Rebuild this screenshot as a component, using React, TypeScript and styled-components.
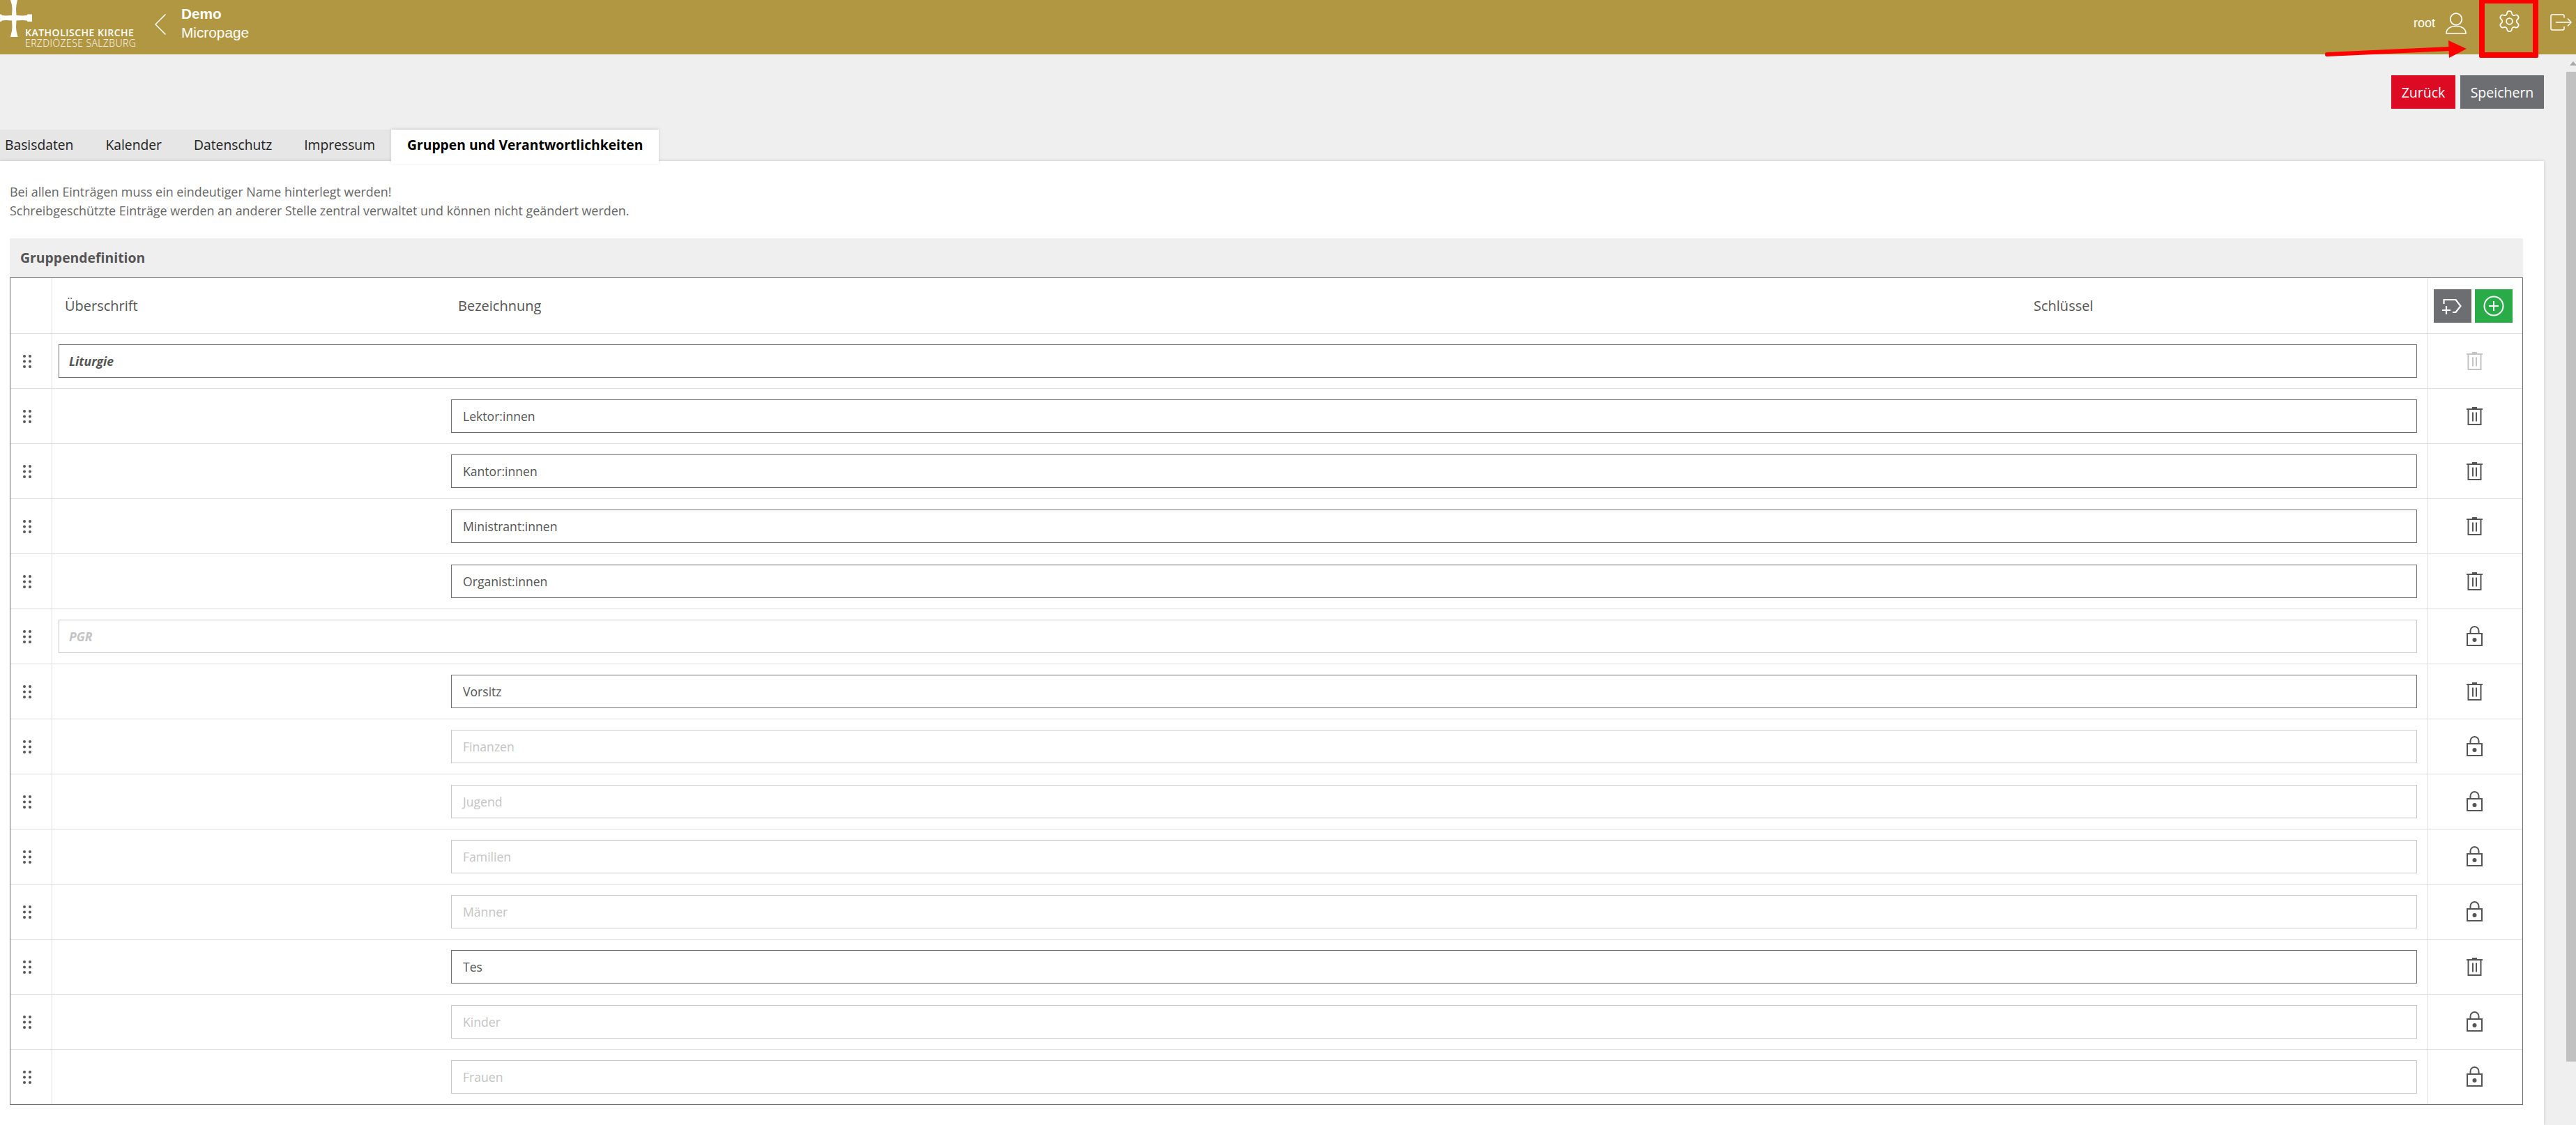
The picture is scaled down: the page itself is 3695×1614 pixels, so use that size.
import React from "react";
import styled, { createGlobalStyle } from "styled-components";
import { Settings } from "lucide-react";

const GlobalStyle = createGlobalStyle`
  html, body {
    margin: 0;
    height: 1614px;
    overflow: hidden;
    background: #efefef;
    font-family: "Open Sans", "Liberation Sans", sans-serif;
  }
  * { box-sizing: border-box; }
`;

const Page = styled.div`
  position: relative;
  width: 3695px;
  height: 1614px;
  overflow: hidden;
`;

const Header = styled.header`
  display: flex;
  height: 78px;
  background: #b29742;
  color: #fff;
`;

const Logo = styled.div`
  display: flex;
  width: 191px;
  flex-shrink: 0;

  svg {
    flex-shrink: 0;
  }
`;

const LogoText = styled.div`
  margin-left: -10px;
  padding-top: 39px;
  font-size: 14px;
  line-height: 15px;
  white-space: nowrap;
`;

const LogoLine = styled.div<{ $light?: boolean }>`
  font-weight: ${(p) => (p.$light ? 300 : 600)};
  letter-spacing: ${(p) => (p.$light ? "0.4px" : "0.5px")};
`;

const BackLink = styled.a`
  display: block;
  margin: 20px 0 0 31px;
  height: 30px;
`;

const PageTitle = styled.div`
  margin-left: 22px;
  padding-top: 6px;
  font-family: "Liberation Sans", Arial, sans-serif;
  font-size: 20.8px;
  line-height: 27px;

  strong {
    display: block;
  }
`;

const UserArea = styled.div`
  display: flex;
  margin-left: auto;
  padding-right: 6px;
`;

const UserName = styled.span`
  margin: 21px 15px 0 0;
  font-family: "Liberation Sans", Arial, sans-serif;
  font-size: 18px;
  line-height: 24px;
`;

const HeaderIcon = styled.a<{ $top: number; $left: number }>`
  display: block;
  margin-top: ${(p) => p.$top}px;
  margin-left: ${(p) => p.$left}px;
`;

const Body = styled.div`
  display: flex;
  height: 1536px;
`;

const Main = styled.main`
  width: 3649px;
  margin-right: 32px;
`;

const Toolbar = styled.div`
  display: flex;
  justify-content: flex-end;
  gap: 7px;
  padding: 30px 0;
`;

const Button = styled.button<{ $bg: string; $width: number }>`
  width: ${(p) => p.$width}px;
  height: 48px;
  padding: 0;
  border: 0;
  background: ${(p) => p.$bg};
  color: #fff;
  font-family: inherit;
  font-size: 19.5px;
`;

const TabBar = styled.nav`
  display: flex;
  height: 45px;
`;

const Tab = styled.a<{ $active?: boolean }>`
  position: relative;
  z-index: ${(p) => (p.$active ? 2 : 0)};
  height: ${(p) => (p.$active ? "49px" : "45px")};
  padding: 0 23px;
  background: ${(p) => (p.$active ? "#fff" : "#e6e6e6")};
  box-shadow: ${(p) => (p.$active ? "0 -1px 4px rgba(0,0,0,.14)" : "none")};
  color: ${(p) => (p.$active ? "#000" : "#222")};
  font-size: 19.3px;
  font-weight: ${(p) => (p.$active ? 700 : 400)};
  line-height: 44px;
  white-space: nowrap;

  &:first-child {
    padding-left: 7px;
  }
`;

const Panel = styled.section`
  position: relative;
  height: 1383px;
  padding: 31px 30px 0 14px;
  background: #fff;
  box-shadow: 0 0 4px rgba(0, 0, 0, 0.2);
`;

const Intro = styled.p`
  margin: 0 0 26px;
  color: #666;
  font-size: 17.9px;
  line-height: 27px;
`;

const SectionTitle = styled.h2`
  height: 56px;
  margin: 0;
  padding-left: 15px;
  background: #efefef;
  color: #555;
  font-size: 19.4px;
  font-weight: 700;
  line-height: 56px;
`;

const Table = styled.div`
  border: 1px solid #6c6e72;
`;

const Row = styled.div<{ $head?: boolean }>`
  display: grid;
  grid-template-columns: 60px 1fr 136px;
  height: ${(p) => (p.$head ? "80px" : "79px")};
  border-bottom: 1px solid #dcdce2;

  &:last-child {
    height: 78px;
    border-bottom: 0;
  }
`;

const GripCell = styled.div`
  display: flex;
  align-items: center;
  padding-left: 18px;
  border-right: 1px solid #dcdce2;
`;

const NameCell = styled.div<{ $child?: boolean }>`
  display: flex;
  align-items: center;
  padding: 0 15px 0 ${(p) => (p.$child ? "572px" : "9px")};
`;

const ActionCell = styled.div`
  display: flex;
  align-items: center;
  justify-content: center;
  padding-right: 2px;
  border-left: 1px solid #dcdce2;
`;

const HeadLabels = styled.div`
  display: grid;
  grid-template-columns: 564px 2260px 1fr;
  width: 100%;
  padding-left: 9px;
  color: #555;
  font-size: 20px;
  font-weight: 400;
`;

const HeadActions = styled.div`
  display: flex;
  gap: 5px;
  padding-left: 8px;
  border-left: 1px solid #dcdce2;
  align-items: center;
`;

const IconButton = styled.button<{ $bg: string }>`
  width: 54px;
  height: 48px;
  padding: 0;
  border: 0;
  background: ${(p) => p.$bg};
  line-height: 0;
`;

const Field = styled.div<{ $locked?: boolean; $heading?: boolean }>`
  width: 100%;
  height: 48px;
  padding-left: ${(p) => (p.$heading ? "14px" : "16px")};
  border: 1px solid ${(p) => (p.$locked ? "#c8c8c8" : "#6c6e72")};
  background: #fff;
  color: ${(p) => (p.$locked ? "#c4c4c4" : "#555")};
  font-size: 17.6px;
  font-style: ${(p) => (p.$heading ? "italic" : "normal")};
  font-weight: ${(p) => (p.$heading ? 700 : 400)};
  line-height: 46px;
`;

const Scrollbar = styled.div`
  position: relative;
  width: 14px;
  padding-top: 25px;
`;

const ScrollArrow = styled.div`
  position: absolute;
  top: 10px;
  left: 5px;
  border-left: 5px solid transparent;
  border-right: 5px solid transparent;
  border-bottom: 6px solid #a8a8a8;
`;

const ScrollThumb = styled.div`
  height: 1420px;
  background: #c1c1c1;
`;

const RedFrame = styled.div`
  position: absolute;
  top: -3px;
  left: 3556px;
  width: 85px;
  height: 86px;
  border: 8px solid #f00;
  border-radius: 2px;
`;

const RedArrow = styled.svg`
  position: absolute;
  top: 55px;
  left: 3330px;
`;

const LockSvg = styled.svg`
  margin-bottom: 2px;
`;

const Cross = () => (
  <svg width="46" height="53" viewBox="0 0 46 53" fill="#fff">
    <path d="M15 0h10l-1.500 7-.5 6 .5 9 9 .5 6-.5 1-1.500h7v10.500h-7l-1-1.500-6-.5-9 .5-.5 9 .5 6 2 8.500h-10.500l2-8.500.5-6-.5-9-9-.5-5 .5-1.500 1.500h-4v-10.500h4l1.500 1.500 5 .5 9-.5.500-9-.5-6z" />
  </svg>
);

const Chevron = () => (
  <svg width="16" height="30" viewBox="0 0 16 30" fill="none" stroke="#fff" strokeWidth="1.500">
    <path d="M15.500 .5 1 15l14.500 14.500" />
  </svg>
);

const UserIcon = () => (
  <svg width="30" height="31" viewBox="0 0 30 31" fill="none" stroke="#fff" strokeWidth="1.700">
    <circle cx="15" cy="9.500" r="8.300" />
    <path d="M1 30c0-7 6-10.500 14-10.500S29 23 29 30z" strokeLinejoin="round" />
  </svg>
);

const LogoutIcon = () => (
  <svg width="31" height="24" viewBox="0 0 31 24" fill="none" stroke="#fff" strokeWidth="1.500">
    <path d="M20 5.500V3a2 2 0 0 0-2-2H3a2 2 0 0 0-2 2v18a2 2 0 0 0 2 2h15a2 2 0 0 0 2-2v-3" />
    <path d="M8 12h22M25 6.500l5 5.500-5 5.500" />
  </svg>
);

const GripIcon = () => (
  <svg width="12" height="19" viewBox="0 0 12 19" fill="#555">
    {[2, 9.500, 17].map((y) =>
      [2, 10].map((x) => <circle key={`${x}-${y}`} cx={x} cy={y} r="2" />)
    )}
  </svg>
);

const TrashIcon = ({ faded }: { faded?: boolean }) => (
  <svg width="23" height="26" viewBox="0 0 23 26" fill="none" stroke={faded ? "#c4c4c4" : "#555"} strokeWidth="2">
    <path d="M0 3h23M8 1h7" />
    <path d="M2.500 3v22h18V3M9 7.500v13M14 7.500v13" />
  </svg>
);

const LockIcon = () => (
  <LockSvg width="23" height="29" viewBox="0 0 23 29" fill="none" stroke="#555" strokeWidth="2">
    <path d="M5.500 11V7a6 6 0 0 1 12 0v4" />
    <rect x="1" y="11" width="21" height="17" />
    <circle cx="11.500" cy="20" r="3" fill="#555" stroke="none" />
  </LockSvg>
);

const AddHeadingIcon = () => (
  <svg width="54" height="48" viewBox="0 0 54 48" fill="none" stroke="#fff" strokeWidth="2.200">
    <path d="M14.500 21v-6h17l7 9-7 9h-4.500M12 30h12M18 24v12" />
  </svg>
);

const AddIcon = () => (
  <svg width="54" height="48" viewBox="0 0 54 48" fill="none" stroke="#fff" strokeWidth="2">
    <circle cx="27" cy="24" r="13.500" />
    <path d="M20 24h14M27 17v14" />
  </svg>
);

type Entry = {
  name: string;
  heading?: boolean;
  locked?: boolean;
};

const entries: Entry[] = [
  { name: "Liturgie", heading: true },
  { name: "Lektor:innen" },
  { name: "Kantor:innen" },
  { name: "Ministrant:innen" },
  { name: "Organist:innen" },
  { name: "PGR", heading: true, locked: true },
  { name: "Vorsitz" },
  { name: "Finanzen", locked: true },
  { name: "Jugend", locked: true },
  { name: "Familien", locked: true },
  { name: "Männer", locked: true },
  { name: "Tes" },
  { name: "Kinder", locked: true },
  { name: "Frauen", locked: true },
];

const tabs = ["Basisdaten", "Kalender", "Datenschutz", "Impressum"];

const App: React.FC = () => {
  const rows = entries.map((item) => (
    <Row key={item.name}>
      <GripCell><GripIcon /></GripCell>
      <NameCell $child={!item.heading}>
        <Field $locked={item.locked} $heading={item.heading}>{item.name}</Field>
      </NameCell>
      <ActionCell>
        {item.locked ? <LockIcon /> : <TrashIcon faded={item.name === "Liturgie"} />}
      </ActionCell>
    </Row>
  ));

  return (
    <Page>
      <GlobalStyle />
      <Header>
        <Logo>
          <Cross />
          <LogoText>
            <LogoLine>KATHOLISCHE KIRCHE</LogoLine>
            <LogoLine $light>ERZDIÖZESE SALZBURG</LogoLine>
          </LogoText>
        </Logo>
        <BackLink><Chevron /></BackLink>
        <PageTitle>
          <strong>Demo</strong>
          Micropage
        </PageTitle>
        <UserArea>
          <UserName>root</UserName>
          <HeaderIcon $top={18} $left={0}><UserIcon /></HeaderIcon>
          <HeaderIcon $top={13} $left={44}><Settings size={35} color="#fff" strokeWidth={1.2} /></HeaderIcon>
          <HeaderIcon $top={20} $left={41}><LogoutIcon /></HeaderIcon>
        </UserArea>
      </Header>
      <Body>
        <Main>
          <Toolbar>
            <Button $bg="#dc0a23" $width={92}>Zurück</Button>
            <Button $bg="#6c6e72" $width={120}>Speichern</Button>
          </Toolbar>
          <TabBar>
            {tabs.map((name) => <Tab key={name}>{name}</Tab>)}
            <Tab $active>Gruppen und Verantwortlichkeiten</Tab>
          </TabBar>
          <Panel>
            <Intro>
              Bei allen Einträgen muss ein eindeutiger Name hinterlegt werden!<br />
              Schreibgeschützte Einträge werden an anderer Stelle zentral verwaltet und können nicht geändert werden.
            </Intro>
            <SectionTitle>Gruppendefinition</SectionTitle>
            <Table>
              <Row $head>
                <GripCell />
                <NameCell>
                  <HeadLabels>
                    <span>Überschrift</span>
                    <span>Bezeichnung</span>
                    <span>Schlüssel</span>
                  </HeadLabels>
                </NameCell>
                <HeadActions>
                  <IconButton $bg="#6c6e72"><AddHeadingIcon /></IconButton>
                  <IconButton $bg="#29ab47"><AddIcon /></IconButton>
                </HeadActions>
              </Row>
              {rows}
            </Table>
          </Panel>
        </Main>
        <Scrollbar>
          <ScrollArrow />
          <ScrollThumb />
        </Scrollbar>
      </Body>
      <RedArrow width="212" height="32" viewBox="0 0 212 32">
        <path d="M8 23 184 15" stroke="#f00" strokeWidth="6" strokeLinecap="round" />
        <path d="M182 3 208 15 183 28z" fill="#f00" />
      </RedArrow>
      <RedFrame />
    </Page>
  );
};

export default App;
